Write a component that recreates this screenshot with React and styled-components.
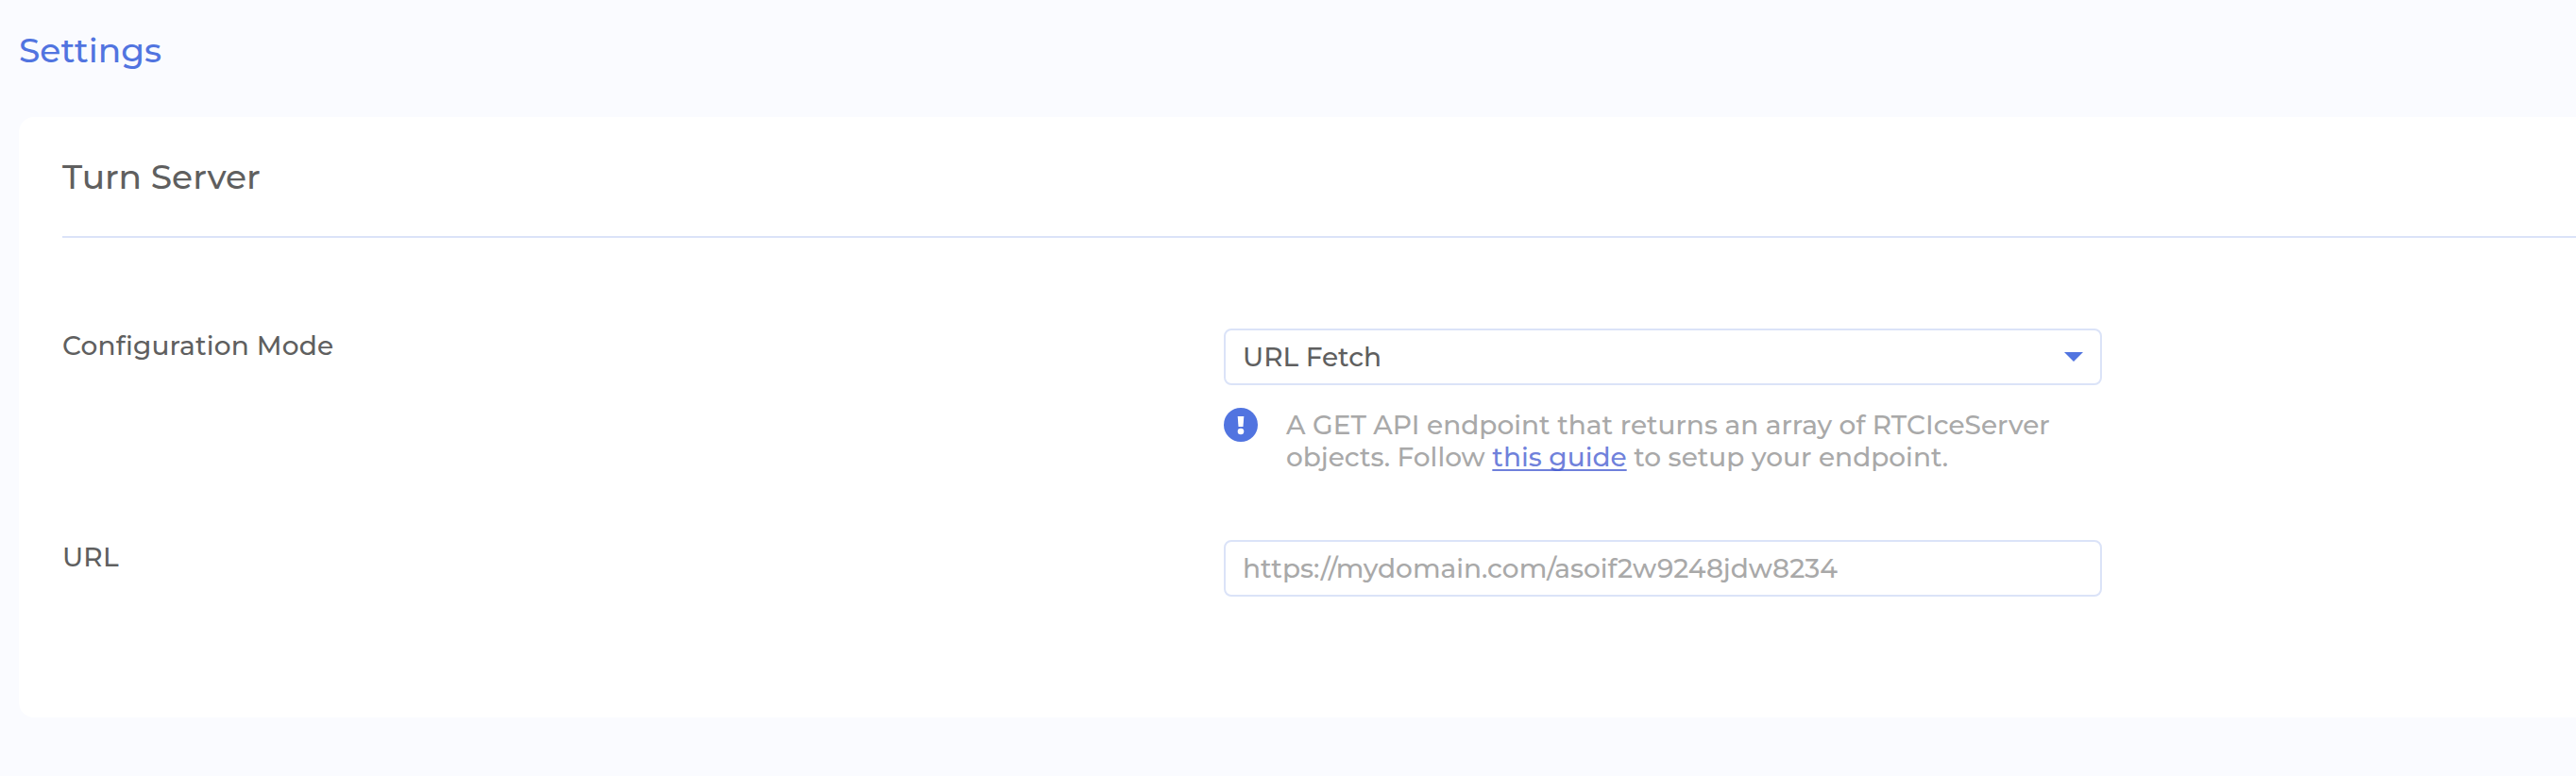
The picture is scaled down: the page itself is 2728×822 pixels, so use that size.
import React from "react";
import styled, { createGlobalStyle } from "styled-components";

const GlobalStyle = createGlobalStyle`
  *, *::before, *::after { box-sizing: border-box; }
  body {
    margin: 0;
    background: #fafbff;
    color: #5f5f5f;
    font-family: Montserrat, Inter, sans-serif;
    font-size: 28px;
    font-weight: 500;
    line-height: 34px;
    overflow: hidden;
  }
`;

const Page = styled.main`
  min-height: 822px;
  padding: 31px 0 0 20px;
`;

const PageTitle = styled.h1`
  margin: 0 0 49px;
  font-size: 36px;
  line-height: 44px;
  font-weight: 500;
  color: #5174e0;
`;

const Card = styled.section`
  height: 636px;
  padding: 41px 0 0 46px;
  background: #fff;
  border-radius: 16px 0 0 16px;
`;

const CardTitle = styled.h2`
  margin: 0;
  padding-bottom: 41px;
  border-bottom: 2px solid #dbe3f8;
  font-size: 36px;
  line-height: 44px;
  font-weight: 500;
`;

const Fields = styled.div`
  display: flex;
  flex-direction: column;
  gap: 62px;
  padding-top: 96px;
`;

const Field = styled.div`
  display: grid;
  grid-template-columns: 1230px 930px;
  align-items: start;
`;

const Label = styled.label`
  padding-top: 1px;
  letter-spacing: 0.2px;
`;

const Select = styled.button`
  display: flex;
  align-items: center;
  justify-content: space-between;
  width: 100%;
  height: 60px;
  padding: 0 18px;
  border: 2px solid #dbe3f8;
  border-radius: 8px;
  background: #fff;
  color: inherit;
  font: inherit;
`;

const Caret = styled.span`
  border: 10px solid transparent;
  border-top-color: #5174e0;
  border-bottom: 0;
`;

const TextInput = styled.input`
  display: block;
  width: 100%;
  height: 60px;
  padding: 0 18px;
  border: 2px solid #dbe3f8;
  border-radius: 8px;
  background: #fff;
  color: inherit;
  font: inherit;
  outline: 0;
  &::placeholder { color: #a9a9a9; opacity: 1; }
`;

const Hint = styled.div`
  display: flex;
  gap: 30px;
  margin-top: 24px;
`;

const HintIcon = styled.svg`
  flex: none;
  width: 36px;
  height: 36px;
`;

const HintText = styled.p`
  margin: 1px 0 9px;
  color: #a9a9a9;
`;

const GuideLink = styled.a`
  color: rgba(65, 88, 208, 0.76);
  text-decoration: underline;
  text-decoration-thickness: 2px;
  text-underline-offset: 3px;
  text-decoration-skip-ink: none;
`;

export default function App() {
  return (
    <>
      <GlobalStyle />
      <Page>
        <PageTitle>Settings</PageTitle>
        <Card>
          <CardTitle>Turn Server</CardTitle>
          <Fields>
            <Field>
              <Label>Configuration Mode</Label>
              <div>
                <Select type="button">
                  URL Fetch
                  <Caret />
                </Select>
                <Hint>
                  <HintIcon viewBox="0 0 36 36" aria-hidden="true">
                    <circle cx="18" cy="18" r="18" fill="#5174e0" />
                    <path d="M14.7 9h6.6l-.8 11h-5z" fill="#fff" />
                    <circle cx="18" cy="25" r="3.3" fill="#fff" />
                  </HintIcon>
                  <HintText>
                    A GET API endpoint that returns an array of RTCIceServer objects. Follow{" "}
                    <GuideLink href="#guide">this guide</GuideLink> to setup your endpoint.
                  </HintText>
                </Hint>
              </div>
            </Field>
            <Field>
              <Label htmlFor="url">URL</Label>
              <TextInput id="url" placeholder="https://mydomain.com/asoif2w9248jdw8234" />
            </Field>
          </Fields>
        </Card>
      </Page>
    </>
  );
}
